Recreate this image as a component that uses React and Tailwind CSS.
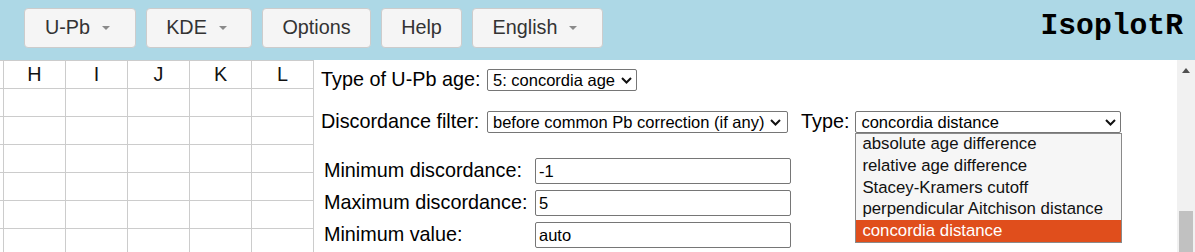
import React from "react";

function Caret() {
  return (
    <svg width="8" height="4" viewBox="0 0 8 4" className="ml-[12px]">
      <polygon points="0,0 8,0 4,4" fill="#8a8a8a" />
    </svg>
  );
}

function Chevron() {
  return (
    <svg width="11" height="7" viewBox="0 0 11 7" className="shrink-0">
      <polyline points="1,1 5.5,5.5 10,1" fill="none" stroke="#111" strokeWidth="2" />
    </svg>
  );
}

function NavButton({ w, label, caret }) {
  return (
    <div
      className={`${w} h-[40px] flex items-center justify-center rounded-[4px] border border-[#cccccc] bg-[#f5f5f5] text-[19.8px] text-[#333333] ${caret ? "pr-[5px]" : ""}`}
    >
      <span>{label}</span>
      {caret && <Caret />}
    </div>
  );
}

function FakeSelect({ w, text, between }) {
  return (
    <div
      className={`${w} h-[22px] flex items-center ${between ? "justify-between" : "gap-[6px]"} border border-[#767676] rounded-[2px] bg-white pl-[5px] pr-[4px] text-[16.5px] text-black leading-none`}
    >
      <span className="whitespace-nowrap">{text}</span>
      <Chevron />
    </div>
  );
}

const cols = ["H", "I", "J", "K", "L"];
const options = [
  "absolute age difference",
  "relative age difference",
  "Stacey-Kramers cutoff",
  "perpendicular Aitchison distance",
  "concordia distance",
];

export default function App() {
  return (
    <div className="w-[1195px] h-[252px] overflow-hidden bg-white font-['Liberation_Sans',Arial,sans-serif] flex flex-col">
      {/* Header */}
      <div className="h-[60px] shrink-0 bg-[#add8e6] flex items-start pl-[24px] pt-[8px] gap-[10px]">
        <NavButton w="w-[112px]" label="U-Pb" caret />
        <NavButton w="w-[106px]" label="KDE" caret />
        <NavButton w="w-[109px]" label="Options" />
        <NavButton w="w-[81px]" label="Help" />
        <NavButton w="w-[131px]" label="English" caret />
        <div className="ml-auto pr-[12px] mt-[4px] font-['Liberation_Mono',monospace] font-bold text-[29.7px] leading-none text-black">
          IsoplotR
        </div>
      </div>

      {/* Body */}
      <div className="flex flex-1 min-h-0">
        {/* Spreadsheet */}
        <div className="w-[314px] shrink-0 overflow-hidden">
          <div className="grid grid-cols-[4px_repeat(5,62px)] border-t border-[#cccccc]">
            <div className="h-[28px] border-r border-b border-[#cccccc]" />
            {cols.map((c) => (
              <div
                key={c}
                className="h-[28px] border-r border-b border-[#cccccc] flex items-center justify-center text-[19.8px] text-[#111]"
              >
                {c}
              </div>
            ))}
            {Array.from({ length: 6 }).map((_, r) => (
              <React.Fragment key={r}>
                <div className="h-[28px] border-r border-b border-[#cccccc]" />
                {cols.map((c) => (
                  <div key={c} className="h-[28px] border-r border-b border-[#cccccc]" />
                ))}
              </React.Fragment>
            ))}
          </div>
        </div>

        {/* Form panel */}
        <div className="flex-1 flex min-w-0">
          <div className="flex-1 pl-[7px] pt-[9px] text-[19.8px] text-black">
            <div className="flex items-center h-[22px]">
              <span className="w-[166px] whitespace-nowrap">Type of U-Pb age:</span>
              <FakeSelect w="w-[150px]" text="5: concordia age" />
            </div>

            <div className="flex items-center h-[22px] mt-[20px]">
              <span className="w-[166px] whitespace-nowrap">Discordance filter:</span>
              <FakeSelect w="w-[301px]" text="before common Pb correction (if any)" />
              <span className="ml-[13px] whitespace-nowrap">Type:</span>
              <div className="relative ml-[6px]">
                <FakeSelect w="w-[266px]" text="concordia distance" between />
                <div className="absolute left-0 top-full w-[267px] border border-[#8a8a8a] bg-[#f6f6f6] text-[16.8px] leading-none z-10">
                  {options.map((o, i) => (
                    <div
                      key={o}
                      className={`h-[21.6px] flex items-center pl-[6px] whitespace-nowrap ${
                        i === 4 ? "bg-[#e04e1c] text-white" : "text-[#111]"
                      }`}
                    >
                      {o}
                    </div>
                  ))}
                </div>
              </div>
            </div>

            <div className="mt-[25px] pl-[3px] flex flex-col gap-[6px]">
              {[
                ["Minimum discordance:", "-1"],
                ["Maximum discordance:", "5"],
                ["Minimum value:", "auto"],
              ].map(([l, v]) => (
                <div key={l} className="flex items-center h-[26px]">
                  <span className="w-[211px] whitespace-nowrap">{l}</span>
                  <input
                    readOnly
                    value={v}
                    className="w-[256px] h-[26px] border border-[#767676] rounded-[2px] pl-[3px] text-[16.5px] text-black bg-white outline-none"
                  />
                </div>
              ))}
            </div>
          </div>

          {/* Scrollbar */}
          <div className="w-[18px] shrink-0 bg-[#f1f1f1] flex flex-col items-center overflow-hidden">
            <svg width="8" height="5" viewBox="0 0 8 5" className="mt-[8px] shrink-0">
              <polygon points="0,5 8,5 4,0" fill="#505050" />
            </svg>
            <div className="mt-[138px] w-[14px] h-[60px] shrink-0 bg-[#c1c1c1]" />
          </div>
        </div>
      </div>
    </div>
  );
}
